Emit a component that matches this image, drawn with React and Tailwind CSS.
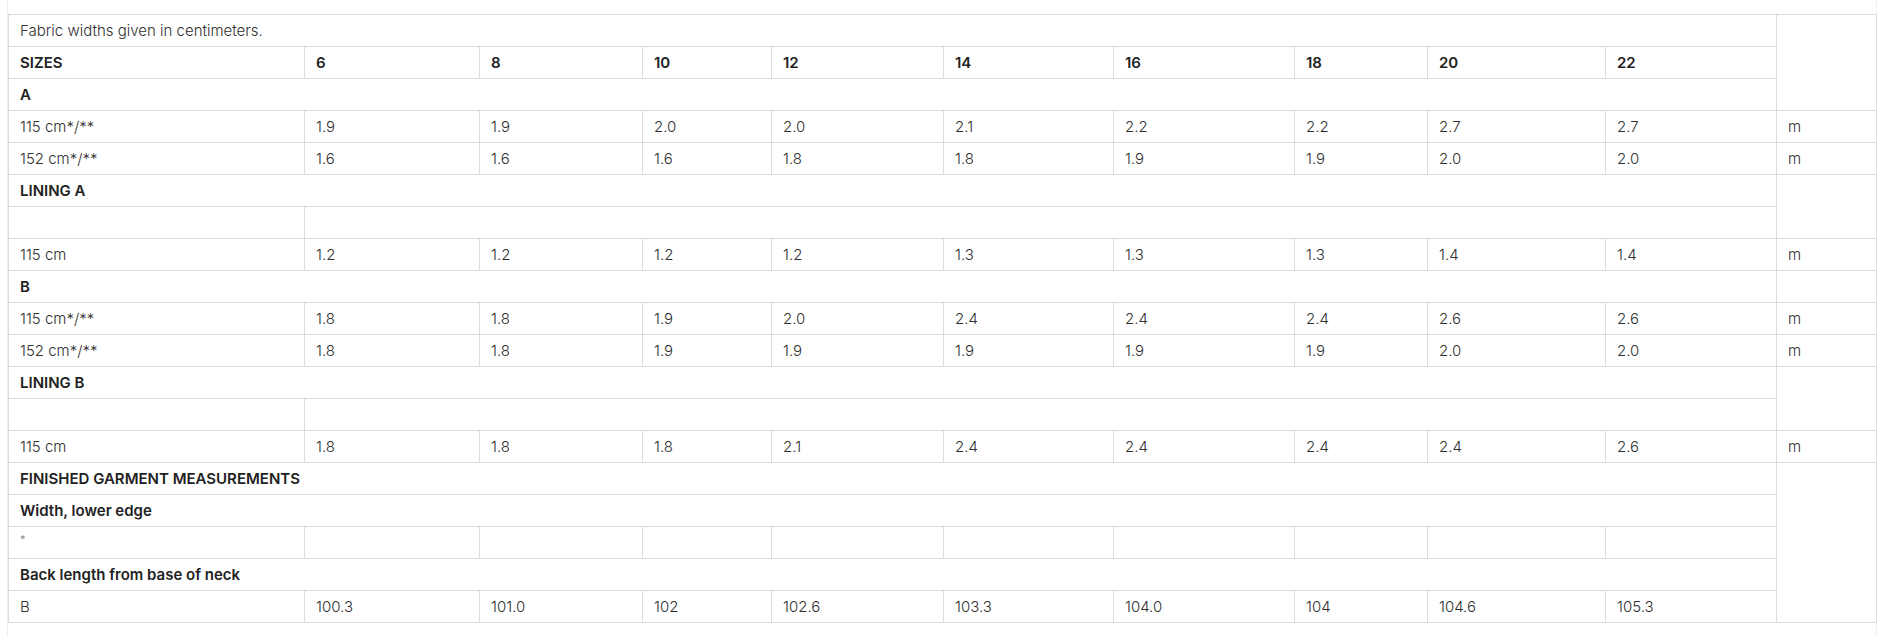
import React from "react";

const widths = [296, 175, 163, 129, 172, 170, 181, 133, 178, 171, 100];
const sizes = ["6", "8", "10", "12", "14", "16", "18", "20", "22"];

const cell = "border border-[#dcdcdc] h-[32px] py-0 pl-[11px] pr-2 align-middle text-left";
const body = cell + " font-light text-[#2f2f2f]";
const bold = cell + " font-semibold text-[#222]";

function Section({ label }) {
  return (
    <tr>
      <td colSpan={10} className={bold}>{label}</td>
    </tr>
  );
}

function DataRow({ label, values, unit }) {
  return (
    <tr>
      <td className={body}>{label}</td>
      {values.map((v, i) => (
        <td key={i} className={body}>{v}</td>
      ))}
      {unit !== undefined && <td className={body}>{unit}</td>}
    </tr>
  );
}

function EmptyRow() {
  return (
    <tr>
      <td className={body}></td>
      <td colSpan={9} className={body}></td>
    </tr>
  );
}

export default function App() {
  return (
    <div className="bg-white min-h-[637px] w-[1882px]" style={{ fontFamily: "Inter, 'Noto Sans', sans-serif" }}>
      <div className="ml-[7px] w-[1870px] border-x border-[#efefef] min-h-[637px] pt-[14px]">
        <table className="table-fixed border-collapse w-[1868px] border border-[#dcdcdc] text-[15px] leading-[16px]">
          <colgroup>
            {widths.map((w, i) => (
              <col key={i} style={{ width: w }} />
            ))}
          </colgroup>
          <tbody>
            <tr>
              <td colSpan={10} className={body}>Fabric widths given in centimeters.</td>
            </tr>
            <tr>
              <td className={bold}>SIZES</td>
              {sizes.map((s) => (
                <td key={s} className={bold}>{s}</td>
              ))}
            </tr>
            <Section label="A" />
            <DataRow label="115 cm*/**" values={["1.9", "1.9", "2.0", "2.0", "2.1", "2.2", "2.2", "2.7", "2.7"]} unit="m" />
            <DataRow label="152 cm*/**" values={["1.6", "1.6", "1.6", "1.8", "1.8", "1.9", "1.9", "2.0", "2.0"]} unit="m" />
            <Section label="LINING A" />
            <EmptyRow />
            <DataRow label="115 cm" values={["1.2", "1.2", "1.2", "1.2", "1.3", "1.3", "1.3", "1.4", "1.4"]} unit="m" />
            <Section label="B" />
            <DataRow label="115 cm*/**" values={["1.8", "1.8", "1.9", "2.0", "2.4", "2.4", "2.4", "2.6", "2.6"]} unit="m" />
            <DataRow label="152 cm*/**" values={["1.8", "1.8", "1.9", "1.9", "1.9", "1.9", "1.9", "2.0", "2.0"]} unit="m" />
            <Section label="LINING B" />
            <EmptyRow />
            <DataRow label="115 cm" values={["1.8", "1.8", "1.8", "2.1", "2.4", "2.4", "2.4", "2.4", "2.6"]} unit="m" />
            <Section label="FINISHED GARMENT MEASUREMENTS" />
            <Section label="Width, lower edge" />
            <tr>
              <td className={body + " text-[11px] text-[#777]"}>
                <span className="relative -top-[3px]">*</span>
              </td>
              {sizes.map((s) => (
                <td key={s} className={body}></td>
              ))}
            </tr>
            <Section label="Back length from base of neck" />
            <DataRow label="B" values={["100.3", "101.0", "102", "102.6", "103.3", "104.0", "104", "104.6", "105.3"]} />
          </tbody>
        </table>
      </div>
    </div>
  );
}
